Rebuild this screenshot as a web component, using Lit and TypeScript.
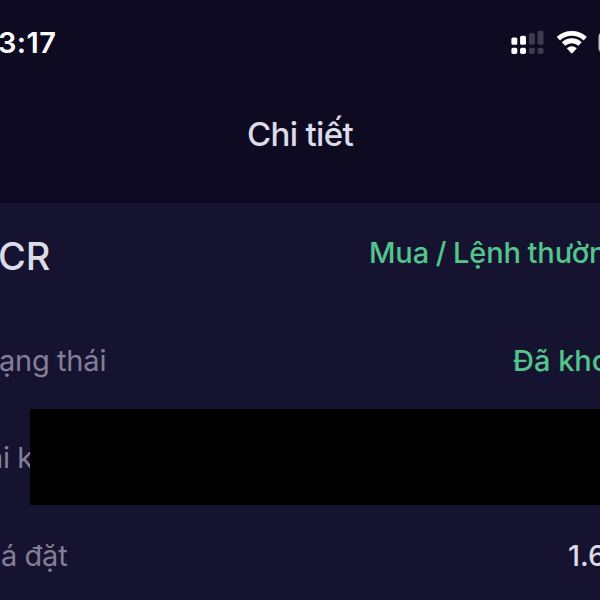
import { LitElement, html, css } from "lit";
import { customElement, property } from "lit/decorators.js";

@customElement("status-bar")
export class StatusBar extends LitElement {
  @property() time = "";

  static styles = css`
    :host {
      display: flex;
      justify-content: space-between;
      height: 86px;
      color: #fff;
    }
    .time {
      margin-left: -2px;
      line-height: 86px;
      font-size: 29px;
      font-weight: 600;
      letter-spacing: 0.4px;
      white-space: nowrap;
    }
    .icons {
      display: block;
      width: 100px;
      height: 86px;
    }
  `;

  render() {
    return html`
      <div class="time">${this.time}</div>
      <svg class="icons" viewBox="500 0 100 86" fill="#fff">
        <rect x="511.4" y="37.6" width="5.9" height="7.2" rx="1.6" />
        <rect x="520.1" y="35.7" width="5.9" height="9.1" rx="1.6" />
        <rect x="528.9" y="33" width="5.9" height="11.8" rx="1.6" fill="#3d3a4e" />
        <rect x="537.6" y="30.8" width="5.9" height="14" rx="1.6" fill="#3d3a4e" />
        <rect x="511.4" y="47.8" width="5.9" height="6.2" rx="1.7" />
        <rect x="520.1" y="47.8" width="5.9" height="6.2" rx="1.7" />
        <rect x="528.9" y="47.8" width="5.9" height="6.2" rx="1.7" fill="#3d3a4e" />
        <rect x="537.6" y="47.8" width="5.9" height="6.2" rx="1.7" fill="#3d3a4e" />
        <g fill="none" stroke="#fff" stroke-width="4.8">
          <path d="M558.4 38.7A19.6 19.6 0 0 1 585.2 38.7" />
          <path d="M563.5 44.1A12 12 0 0 1 580.1 44.1" />
        </g>
        <path d="M566.8 48.3Q571.8 44.3 576.8 48.3L572.6 53Q571.8 53.8 571 53Z" />
        <rect x="599.5" y="32" width="40" height="21" rx="5" fill="none" stroke="#c4c2cc" stroke-width="2" />
      </svg>
    `;
  }
}

@customElement("detail-row")
export class DetailRow extends LitElement {
  @property() label = "";
  @property() value = "";

  static styles = css`
    :host {
      display: flex;
      justify-content: space-between;
      height: 97px;
      line-height: 97px;
      font-size: 29px;
      white-space: nowrap;
    }
    .label {
      color: #827f96;
      letter-spacing: -0.2px;
      word-spacing: -0.5px;
    }
    .value {
      width: var(--value-width, 0);
      color: var(--value-color, #dddbe8);
      font-weight: 500;
    }
  `;

  render() {
    return html`
      <div class="label">${this.label}</div>
      <div class="value">${this.value}</div>
    `;
  }
}

@customElement("app-root")
export class AppRoot extends LitElement {
  static styles = css`
    :host {
      display: flex;
      flex-direction: column;
      width: 600px;
      height: 600px;
      overflow: hidden;
      background: #0d0a22;
      font-family: Inter, "Liberation Sans", sans-serif;
    }
    .header {
      flex: 0 0 203px;
    }
    .title {
      line-height: 97px;
      text-align: center;
      color: #dddbe8;
      font-size: 33px;
      font-weight: 500;
      letter-spacing: -0.65px;
    }
    .panel {
      flex: 1;
      background: #161330;
    }
    .order {
      display: flex;
      justify-content: space-between;
      height: 109px;
      white-space: nowrap;
    }
    .symbol {
      margin-left: -2px;
      line-height: 107px;
      color: #dddbe8;
      font-size: 38px;
      font-weight: 500;
    }
    .side {
      width: 231px;
      line-height: 99px;
      color: #53c58c;
      font-size: 29px;
      font-weight: 500;
      letter-spacing: -0.1px;
      word-spacing: -1px;
    }
    .status {
      margin-left: -1px;
      --value-width: 87px;
      --value-color: #53c58c;
    }
    .account {
      display: flex;
      height: 97px;
    }
    .clip {
      flex: 0 0 30px;
      overflow: hidden;
    }
    .clip detail-row {
      margin-left: -13px;
      word-spacing: 1px;
    }
    .mask {
      flex: 1;
      height: 96px;
      background: #000;
    }
    .price {
      margin-left: 1px;
      line-height: 99px;
      --value-width: 32px;
    }
  `;

  render() {
    return html`
      <div class="header">
        <status-bar time="3:17"></status-bar>
        <div class="title">Chi tiết</div>
      </div>
      <div class="panel">
        <div class="order">
          <div class="symbol">CR</div>
          <div class="side">Mua / Lệnh thườn</div>
        </div>
        <detail-row class="status" label="ạng thái" value="Đã kho"></detail-row>
        <div class="account">
          <div class="clip"><detail-row label="ài k"></detail-row></div>
          <div class="mask"></div>
        </div>
        <detail-row class="price" label="á đặt" value="1.6"></detail-row>
      </div>
    `;
  }
}
